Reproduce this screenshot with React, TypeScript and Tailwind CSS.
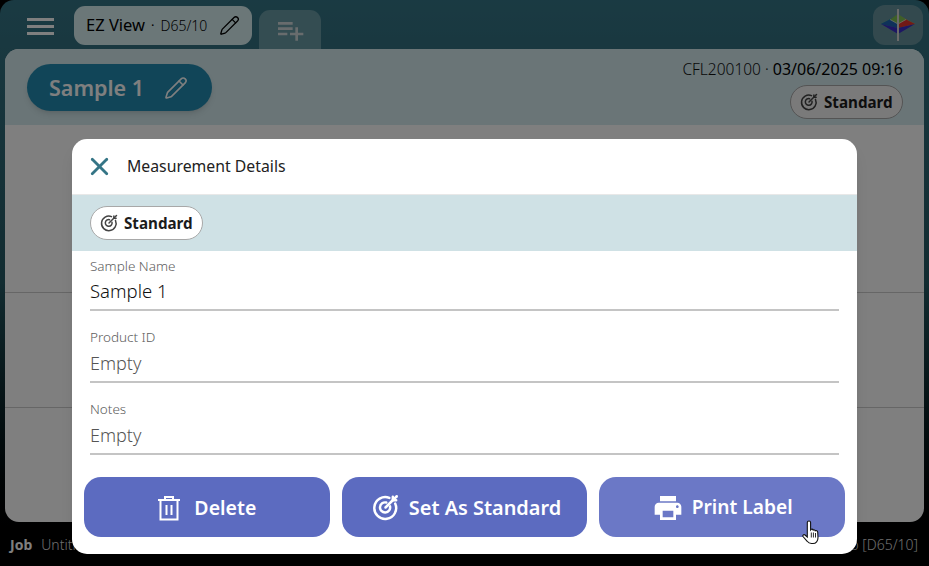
import { Pencil, X } from 'lucide-react';
import { MdPlaylistAdd, MdPrint } from 'react-icons/md';

const font = { fontFamily: '"Noto Sans", sans-serif' };

const TargetIcon = ({ size = 18, weight = 2 }: { size?: number; weight?: number }) => (
  <svg width={size} height={size} viewBox="0 0 24 24" fill="none" stroke="currentColor" strokeWidth={weight} strokeLinecap="round">
    <path d="M20.600 8.500a9.700 9.700 0 1 1-5.200-5" />
    <path d="M16 11a4.500 4.500 0 1 1-3.300-3.400" />
    <path d="M12 12l10-10" />
    <path d="M18.500 2.500v3h3" />
  </svg>
);

const TrashIcon = () => (
  <svg width="24" height="26" viewBox="0 0 24 26" fill="none" stroke="currentColor" strokeWidth="2">
    <path d="M1 5h22" />
    <path d="M8 5V2h8v3" />
    <path d="M3.500 5v19.500h17V5" />
    <path d="M9.500 10v10M14.500 10v10" />
  </svg>
);

const HandCursor = () => (
  <svg width="19" height="25" viewBox="0 0 19 25">
    <path
      d="M7 1c1 0 1.600.7 1.600 1.600V10l.7-.8c1-.2 1.700.1 1.900.9.9-.5 1.900-.2 2.100.7.900-.4 2.300-.1 2.400 1.200l.3 5.800c0 3-2 5.700-5 5.700H9.500c-2 0-3.300-.8-4.300-2.200L1 16.500c-.6-1 .5-2.400 1.700-1.700L5.300 17V2.600C5.300 1.700 6 1 7 1z"
      fill="#fff"
      stroke="#111"
      strokeWidth="1.100"
    />
    <path d="M9.300 12.500v5M11.400 12.500v5M13.500 13v4.500" stroke="#111" strokeWidth="0.900" />
  </svg>
);

const Logo = () => (
  <svg width="36" height="32" viewBox="0 0 36 32">
    <path d="M18 6L1 15l17 4z" fill="#17a08c" />
    <path d="M18 6l17 9-17 4z" fill="#d9b82e" />
    <path d="M1 15l9-4.500 8 4.500v4z" fill="#1f63b5" />
    <path d="M18 5l8 5.500-8 4.500-8-4.500z" fill="#7fbf50" />
    <path d="M35 15l-9-4.500-8 4.500v4z" fill="#e2332c" />
    <path d="M1 15l17 10 17-10-17 4z" fill="#3b2cc6" />
    <path d="M10 10.500l8 4.500 8-4.500M18 15v5" stroke="#e8e8e8" strokeWidth="1" fill="none" opacity="0.7" />
    <rect x="17" y="0" width="2" height="32" fill="#d4d4d4" />
  </svg>
);

const StandardChip = ({ className }: { className: string }) => (
  <div className={`flex h-[34px] w-[113px] items-center gap-[6px] rounded-full border border-[#a8a8a8] pl-[9px] text-[15.200px] font-bold text-[#1c1c1c] ${className}`}>
    <span className="text-[#444]"><TargetIcon /></span>
    <span className="pt-[1px]">Standard</span>
  </div>
);

const Field = ({ label, value, empty }: { label: string; value: string; empty?: boolean }) => (
  <div className="mx-[18px] flex h-[60px] flex-col justify-end border-b-2 border-[#c4c4c4] pb-[5px]">
    <span className="text-[13.500px] font-light leading-[17px] text-[#5e5e5e]">{label}</span>
    <span className={empty ? 'mt-[5px] text-[18px] font-light leading-[25px] text-[#555]' : 'mt-[2px] text-[18.500px] font-light leading-[27px] text-[#111]'}>{value}</span>
  </div>
);

const ActionButton = ({ label, icon, textClass, bg }: { label: string; icon: React.ReactNode; textClass: string; bg: string }) => (
  <button className={`flex h-[60px] w-[246px] items-center justify-center rounded-[17px] pt-[1px] font-semibold text-white ${textClass} ${bg}`}>
    {icon}
    {label}
  </button>
);

export default function App() {
  return (
    <div className="relative h-[566px] w-[929px] overflow-hidden bg-black" style={font}>
      <div className="flex h-full flex-col rounded-t-[14px] bg-gradient-to-b from-[#357586] via-[#245862] to-[#000000]">
        {/* top bar */}
        <div className="flex h-[49px] shrink-0 items-start">
          <button className="ml-[27px] mt-[18px] flex w-[27px] flex-col gap-[4px]">
            <span className="h-[3px] bg-white" />
            <span className="h-[3px] bg-white" />
            <span className="h-[3px] bg-white" />
          </button>
          <div className="ml-[20px] mt-[6px] flex h-[39px] w-[178px] items-center rounded-[11px] bg-[#d7eef0] pl-[12px] text-black">
            <span className="text-[16.500px] font-normal">EZ View</span>
            <span className="mx-[6px] text-[13px]">·</span>
            <span className="text-[14px] font-light">D65/10</span>
            <Pencil size={21} strokeWidth={1.500} className="ml-[12px]" />
          </div>
          <div className="ml-[7px] mt-[10px] flex h-[39px] w-[62px] items-center justify-center rounded-t-[11px] bg-[#689aa4] text-[#d0d8da]">
            <MdPlaylistAdd size={32} />
          </div>
          <div className="ml-auto mr-[6px] mt-[5px] flex h-[40px] w-[50px] items-center justify-center rounded-[12px] bg-[#67939d]">
            <Logo />
          </div>
        </div>

        {/* measurement panel */}
        <div className="mx-[5px] flex h-[473px] shrink-0 flex-col overflow-hidden rounded-[14px] bg-white">
          <div className="flex h-[76px] shrink-0 items-start justify-between bg-[#d4eaee] pl-[22px] pr-[21px]">
            <div className="mt-[15px] flex h-[47px] w-[185px] items-center rounded-full bg-[#228bb0] pl-[22px] text-white shadow-md">
              <span className="pt-[2px] text-[21.500px] font-semibold">Sample 1</span>
              <Pencil size={24} strokeWidth={1.600} className="ml-[20px]" />
            </div>
            <div className="mt-[9px] flex flex-col items-end">
              <div className="text-[15.500px] font-light leading-[22px] text-[#111]">
                CFL200100 · <span className="text-[16px] font-normal text-black">03/06/2025 09:16</span>
              </div>
              <StandardChip className="mt-[5px] bg-[#f4f4f4]" />
            </div>
          </div>
          <div className="h-[168px] shrink-0 border-b border-[#cccccc]" />
          <div className="h-[115px] shrink-0 border-b border-[#cccccc]" />
        </div>

        {/* status bar */}
        <div className="flex flex-1 items-center justify-between pl-[10px] pr-[11px] text-[14px] text-white">
          <div>
            <span className="mr-[9px] text-[14px] font-bold">Job</span>
            <span className="font-light text-[#dddddd]">Untitled 001</span>
          </div>
          <span className="font-light text-[#dddddd]">Workspace CIELab [D65/10]</span>
        </div>
      </div>

      <div className="absolute inset-0 bg-black/50" />

      {/* dialog */}
      <div className="absolute left-[72px] top-[139px] h-[415px] w-[785px] overflow-hidden rounded-[15px] bg-white shadow-lg">
        <div className="flex h-[56px] items-center border-b border-[#e8e8e8]">
          <X size={29} strokeWidth={2.300} className="ml-[13px] text-[#357586]" />
          <span className="ml-[13px] pt-[1px] text-[15.800px] font-normal text-[#222]">Measurement Details</span>
        </div>
        <div className="flex h-[56px] items-center bg-[#cfe1e5] pl-[18px]">
          <StandardChip className="bg-white" />
        </div>
        <div className="flex flex-col">
          <Field label="Sample Name" value="Sample 1" />
          <div className="mt-[12px]"><Field label="Product ID" value="Empty" empty /></div>
          <div className="mt-[12px]"><Field label="Notes" value="Empty" empty /></div>
        </div>
        <div className="mt-[22px] flex gap-[12px] px-[12px]">
          <ActionButton label="Delete" textClass="text-[19.500px]" bg="bg-[#5c6bc0]" icon={<span className="mr-[13px]"><TrashIcon /></span>} />
          <ActionButton label="Set As Standard" textClass="pl-[4px] text-[19.900px]" bg="bg-[#5c6bc0]" icon={<span className="mr-[10px]"><TargetIcon size={27} weight={2.200} /></span>} />
          <ActionButton label="Print Label" textClass="text-[19.200px]" bg="bg-[#6b78c6]" icon={<span className="mr-[8px]"><MdPrint size={32} /></span>} />
        </div>
      </div>

      <div className="absolute left-[802px] top-[520px]">
        <HandCursor />
      </div>
    </div>
  );
}
